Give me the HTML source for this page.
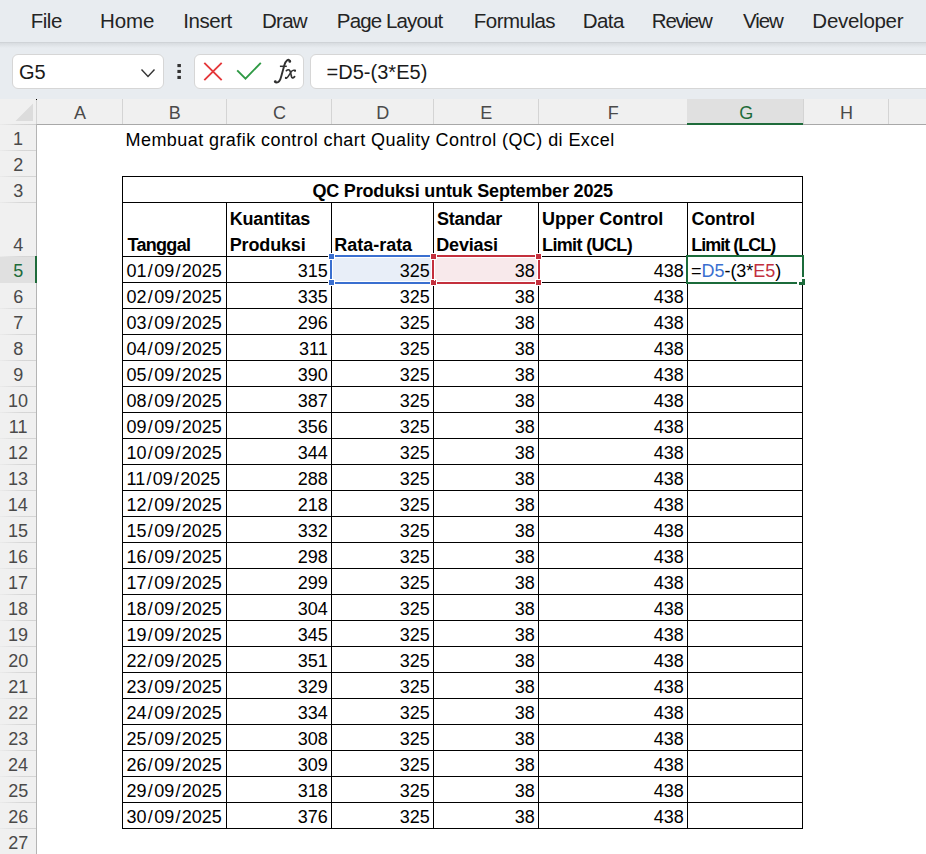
<!DOCTYPE html>
<html><head><meta charset="utf-8"><style>
html,body{margin:0;padding:0;width:926px;height:854px;overflow:hidden;background:#fff;position:relative}
.r{position:absolute}
.t{position:absolute;white-space:nowrap;line-height:0;height:0;font-family:"Liberation Sans",sans-serif}
svg{position:absolute}
</style></head><body>
<div class="r" style="left:0px;top:0px;width:926px;height:42px;background:#e8ecf0;"></div>
<div class="r" style="left:0px;top:42px;width:926px;height:57px;background:#e8ecf0;"></div>
<div class="r" style="left:0px;top:42px;width:926px;height:1px;background:#cfd3d7;"></div>
<div class="r" style="left:0px;top:43px;width:926px;height:5px;background:linear-gradient(#d8dce0,#e8ecf0);"></div>
<div class="t" style="left:30.66px;top:21.09px;font-size:20.5px;letter-spacing:-0.448px;color:#242424;">File</div>
<div class="t" style="left:99.96px;top:21.09px;font-size:20.5px;letter-spacing:-0.091px;color:#242424;">Home</div>
<div class="t" style="left:183.35px;top:21.09px;font-size:20.5px;letter-spacing:-0.461px;color:#242424;">Insert</div>
<div class="t" style="left:261.96px;top:21.09px;font-size:20.5px;letter-spacing:-0.709px;color:#242424;">Draw</div>
<div class="t" style="left:336.86px;top:21.09px;font-size:20.5px;letter-spacing:-0.876px;color:#242424;">Page Layout</div>
<div class="t" style="left:473.86px;top:21.09px;font-size:20.5px;letter-spacing:-0.533px;color:#242424;">Formulas</div>
<div class="t" style="left:582.66px;top:21.09px;font-size:20.5px;letter-spacing:-0.505px;color:#242424;">Data</div>
<div class="t" style="left:651.86px;top:21.09px;font-size:20.5px;letter-spacing:-1.260px;color:#242424;">Review</div>
<div class="t" style="left:742.90px;top:21.09px;font-size:20.5px;letter-spacing:-1.024px;color:#242424;">View</div>
<div class="t" style="left:812.36px;top:21.09px;font-size:20.5px;letter-spacing:-0.279px;color:#242424;">Developer</div>
<div class="r" style="left:12px;top:54px;width:152px;height:35px;background:#fff;border:1px solid #d6d6d6;border-radius:6px;box-sizing:border-box"></div>
<div class="t" style="left:19.00px;top:72.07px;font-size:20px;letter-spacing:0.000px;color:#1a1a1a;">G5</div>
<svg class="r" style="left:0;top:0" width="926" height="99"><polyline points="141.5,69.5 148,76.5 154.5,69.5" fill="none" stroke="#333" stroke-width="1.4"/><rect x="177.4" y="64" width="3.5" height="3.1" fill="#333"/><rect x="177.4" y="69.9" width="3.5" height="3.1" fill="#333"/><rect x="177.4" y="75.9" width="3.5" height="3.1" fill="#333"/></svg>
<div class="r" style="left:194px;top:54px;width:110px;height:35px;background:#fff;border:1px solid #d6d6d6;border-radius:6px;box-sizing:border-box"></div>
<svg class="r" style="left:0;top:0" width="926" height="99"><path d="M204.3 62.8 L221.7 80.2 M221.7 62.8 L204.3 80.2" stroke="#e5383b" stroke-width="1.9" fill="none"/><polyline points="237.2,70.3 245.5,78.6 260.8,62.8" stroke="#2f9a45" stroke-width="1.9" fill="none"/></svg>
<svg class="r" style="left:0;top:0" width="926" height="99" fill="none" stroke="#303030" stroke-linecap="round"><path d="M289.9 61.2 C289.6 59.6 288.3 59.4 287.2 60.2 C285.9 61.2 285.0 62.8 284.4 65 L281.2 76.5 C280.3 80.2 278.8 82.5 276.6 82.6 C275.9 82.6 275.4 82.3 275.2 81.8" stroke-width="1.9"/><circle cx="289.8" cy="61.4" r="1.35" fill="#303030" stroke="none"/><circle cx="275.3" cy="81.6" r="1.35" fill="#303030" stroke="none"/><path d="M279.9 66.3 L286.8 66.3" stroke-width="1.5" stroke-linecap="butt"/><path d="M286.4 70.6 C287.6 69.6 289.0 69.4 289.8 70.6 C290.4 71.5 290.9 73.5 291.4 76.2 C291.8 78.0 292.8 78.6 294.6 76.6" stroke-width="1.7"/><path d="M295.0 70.6 C293.6 69.8 292.4 70.4 291.3 71.6 L288.2 76.4 C287.4 77.8 286.6 78.4 285.8 78.0" stroke-width="1.5"/><circle cx="295.0" cy="70.7" r="1.1" fill="#303030" stroke="none"/><circle cx="285.9" cy="77.9" r="1.1" fill="#303030" stroke="none"/></svg>
<div class="r" style="left:310px;top:54px;width:640px;height:35px;background:#fff;border:1px solid #d6d6d6;border-radius:6px;box-sizing:border-box"></div>
<div class="t" style="left:326.60px;top:71.77px;font-size:20px;letter-spacing:0.011px;color:#1a1a1a;">=D5-(3*E5)</div>
<div class="r" style="left:0px;top:99px;width:926px;height:25px;background:#f0f0f0;"></div>
<div class="r" style="left:0px;top:124px;width:36px;height:730px;background:#f0f0f0;"></div>
<svg class="r" style="left:0;top:99" width="36" height="25"><polygon points="33,4.5 33,22 15.5,22" fill="#dcdcdc"/></svg>
<div class="r" style="left:122px;top:99px;width:1px;height:25px;background:#d4d4d4;"></div>
<div class="r" style="left:226px;top:99px;width:1px;height:25px;background:#d4d4d4;"></div>
<div class="r" style="left:331px;top:99px;width:1px;height:25px;background:#d4d4d4;"></div>
<div class="r" style="left:433px;top:99px;width:1px;height:25px;background:#d4d4d4;"></div>
<div class="r" style="left:538px;top:99px;width:1px;height:25px;background:#d4d4d4;"></div>
<div class="r" style="left:687px;top:99px;width:1px;height:25px;background:#d4d4d4;"></div>
<div class="r" style="left:687px;top:99px;width:116px;height:25px;background:#e0e0e0;"></div>
<div class="r" style="left:803px;top:99px;width:1px;height:25px;background:#d4d4d4;"></div>
<div class="r" style="left:888px;top:99px;width:1px;height:25px;background:#d4d4d4;"></div>
<div class="r" style="left:1000px;top:99px;width:1px;height:25px;background:#d4d4d4;"></div>
<div class="r" style="left:36px;top:124px;width:890px;height:1px;background:#a8a8a8;"></div>
<div class="r" style="left:0px;top:124px;width:36px;height:1px;background:linear-gradient(to right,#ebebeb,#d6d6d6 60%,#cfcfcf);"></div>
<div class="r" style="left:687px;top:123px;width:116px;height:2px;background:#1e6b3a;"></div>
<div class="r" style="left:36px;top:99px;width:1px;height:25px;background:#d4d4d4;"></div>
<div class="r" style="left:36px;top:124px;width:1px;height:730px;background:#b4b4b4;"></div>
<div class="r" style="left:36px;top:99px;width:1px;height:1px;background:#000;"></div>
<div class="t" style="left:74.02px;top:112.56px;font-size:18px;letter-spacing:0.000px;color:#4a4a4a;">A</div>
<div class="t" style="left:168.75px;top:112.56px;font-size:18px;letter-spacing:0.000px;color:#4a4a4a;">B</div>
<div class="t" style="left:272.89px;top:112.56px;font-size:18px;letter-spacing:0.000px;color:#4a4a4a;">C</div>
<div class="t" style="left:376.20px;top:112.56px;font-size:18px;letter-spacing:0.000px;color:#4a4a4a;">D</div>
<div class="t" style="left:480.16px;top:112.56px;font-size:18px;letter-spacing:0.000px;color:#4a4a4a;">E</div>
<div class="t" style="left:607.65px;top:112.56px;font-size:18px;letter-spacing:0.000px;color:#4a4a4a;">F</div>
<div class="t" style="left:739.21px;top:112.56px;font-size:18px;letter-spacing:0.000px;color:#1e6b3a;">G</div>
<div class="t" style="left:840.02px;top:112.56px;font-size:18px;letter-spacing:0.000px;color:#4a4a4a;">H</div>
<div class="r" style="left:0px;top:150px;width:36px;height:1px;background:linear-gradient(to right,#ebebeb,#d6d6d6 60%,#d4d4d4);"></div>
<div class="r" style="left:0px;top:176px;width:36px;height:1px;background:linear-gradient(to right,#ebebeb,#d6d6d6 60%,#d4d4d4);"></div>
<div class="r" style="left:0px;top:202px;width:36px;height:1px;background:linear-gradient(to right,#ebebeb,#d6d6d6 60%,#d4d4d4);"></div>
<div class="r" style="left:0px;top:256px;width:36px;height:1px;background:linear-gradient(to right,#ebebeb,#d6d6d6 60%,#d4d4d4);"></div>
<div class="r" style="left:0px;top:282px;width:36px;height:1px;background:linear-gradient(to right,#ebebeb,#d6d6d6 60%,#d4d4d4);"></div>
<div class="r" style="left:0px;top:257px;width:35px;height:26px;background:#e0e0e0;"></div>
<div class="r" style="left:35px;top:256px;width:2px;height:27px;background:#1e6b3a;"></div>
<div class="r" style="left:0px;top:308px;width:36px;height:1px;background:linear-gradient(to right,#ebebeb,#d6d6d6 60%,#d4d4d4);"></div>
<div class="r" style="left:0px;top:334px;width:36px;height:1px;background:linear-gradient(to right,#ebebeb,#d6d6d6 60%,#d4d4d4);"></div>
<div class="r" style="left:0px;top:360px;width:36px;height:1px;background:linear-gradient(to right,#ebebeb,#d6d6d6 60%,#d4d4d4);"></div>
<div class="r" style="left:0px;top:386px;width:36px;height:1px;background:linear-gradient(to right,#ebebeb,#d6d6d6 60%,#d4d4d4);"></div>
<div class="r" style="left:0px;top:412px;width:36px;height:1px;background:linear-gradient(to right,#ebebeb,#d6d6d6 60%,#d4d4d4);"></div>
<div class="r" style="left:0px;top:438px;width:36px;height:1px;background:linear-gradient(to right,#ebebeb,#d6d6d6 60%,#d4d4d4);"></div>
<div class="r" style="left:0px;top:464px;width:36px;height:1px;background:linear-gradient(to right,#ebebeb,#d6d6d6 60%,#d4d4d4);"></div>
<div class="r" style="left:0px;top:490px;width:36px;height:1px;background:linear-gradient(to right,#ebebeb,#d6d6d6 60%,#d4d4d4);"></div>
<div class="r" style="left:0px;top:516px;width:36px;height:1px;background:linear-gradient(to right,#ebebeb,#d6d6d6 60%,#d4d4d4);"></div>
<div class="r" style="left:0px;top:542px;width:36px;height:1px;background:linear-gradient(to right,#ebebeb,#d6d6d6 60%,#d4d4d4);"></div>
<div class="r" style="left:0px;top:568px;width:36px;height:1px;background:linear-gradient(to right,#ebebeb,#d6d6d6 60%,#d4d4d4);"></div>
<div class="r" style="left:0px;top:594px;width:36px;height:1px;background:linear-gradient(to right,#ebebeb,#d6d6d6 60%,#d4d4d4);"></div>
<div class="r" style="left:0px;top:620px;width:36px;height:1px;background:linear-gradient(to right,#ebebeb,#d6d6d6 60%,#d4d4d4);"></div>
<div class="r" style="left:0px;top:646px;width:36px;height:1px;background:linear-gradient(to right,#ebebeb,#d6d6d6 60%,#d4d4d4);"></div>
<div class="r" style="left:0px;top:672px;width:36px;height:1px;background:linear-gradient(to right,#ebebeb,#d6d6d6 60%,#d4d4d4);"></div>
<div class="r" style="left:0px;top:698px;width:36px;height:1px;background:linear-gradient(to right,#ebebeb,#d6d6d6 60%,#d4d4d4);"></div>
<div class="r" style="left:0px;top:724px;width:36px;height:1px;background:linear-gradient(to right,#ebebeb,#d6d6d6 60%,#d4d4d4);"></div>
<div class="r" style="left:0px;top:750px;width:36px;height:1px;background:linear-gradient(to right,#ebebeb,#d6d6d6 60%,#d4d4d4);"></div>
<div class="r" style="left:0px;top:776px;width:36px;height:1px;background:linear-gradient(to right,#ebebeb,#d6d6d6 60%,#d4d4d4);"></div>
<div class="r" style="left:0px;top:802px;width:36px;height:1px;background:linear-gradient(to right,#ebebeb,#d6d6d6 60%,#d4d4d4);"></div>
<div class="r" style="left:0px;top:828px;width:36px;height:1px;background:linear-gradient(to right,#ebebeb,#d6d6d6 60%,#d4d4d4);"></div>
<div class="r" style="left:0px;top:854px;width:36px;height:1px;background:linear-gradient(to right,#ebebeb,#d6d6d6 60%,#d4d4d4);"></div>
<div class="t" style="left:13.04px;top:139.26px;font-size:18px;letter-spacing:0.000px;color:#4a4a4a;">1</div>
<div class="t" style="left:13.31px;top:165.26px;font-size:18px;letter-spacing:0.000px;color:#4a4a4a;">2</div>
<div class="t" style="left:13.35px;top:191.26px;font-size:18px;letter-spacing:0.000px;color:#4a4a4a;">3</div>
<div class="t" style="left:13.35px;top:245.26px;font-size:18px;letter-spacing:0.000px;color:#4a4a4a;">4</div>
<div class="t" style="left:13.30px;top:271.26px;font-size:18px;letter-spacing:0.000px;color:#1e6b3a;">5</div>
<div class="t" style="left:13.21px;top:297.26px;font-size:18px;letter-spacing:0.000px;color:#4a4a4a;">6</div>
<div class="t" style="left:13.31px;top:323.26px;font-size:18px;letter-spacing:0.000px;color:#4a4a4a;">7</div>
<div class="t" style="left:13.30px;top:349.26px;font-size:18px;letter-spacing:0.000px;color:#4a4a4a;">8</div>
<div class="t" style="left:13.30px;top:375.26px;font-size:18px;letter-spacing:0.000px;color:#4a4a4a;">9</div>
<div class="t" style="left:7.95px;top:401.26px;font-size:18px;letter-spacing:0.000px;color:#4a4a4a;">10</div>
<div class="t" style="left:8.72px;top:427.26px;font-size:18px;letter-spacing:0.000px;color:#4a4a4a;">11</div>
<div class="t" style="left:8.09px;top:453.26px;font-size:18px;letter-spacing:0.000px;color:#4a4a4a;">12</div>
<div class="t" style="left:7.99px;top:479.26px;font-size:18px;letter-spacing:0.000px;color:#4a4a4a;">13</div>
<div class="t" style="left:7.86px;top:505.26px;font-size:18px;letter-spacing:0.000px;color:#4a4a4a;">14</div>
<div class="t" style="left:7.99px;top:531.26px;font-size:18px;letter-spacing:0.000px;color:#4a4a4a;">15</div>
<div class="t" style="left:7.99px;top:557.26px;font-size:18px;letter-spacing:0.000px;color:#4a4a4a;">16</div>
<div class="t" style="left:8.09px;top:583.26px;font-size:18px;letter-spacing:0.000px;color:#4a4a4a;">17</div>
<div class="t" style="left:7.99px;top:609.26px;font-size:18px;letter-spacing:0.000px;color:#4a4a4a;">18</div>
<div class="t" style="left:8.04px;top:635.26px;font-size:18px;letter-spacing:0.000px;color:#4a4a4a;">19</div>
<div class="t" style="left:8.18px;top:661.26px;font-size:18px;letter-spacing:0.000px;color:#4a4a4a;">20</div>
<div class="t" style="left:8.27px;top:687.26px;font-size:18px;letter-spacing:0.000px;color:#4a4a4a;">21</div>
<div class="t" style="left:8.31px;top:713.26px;font-size:18px;letter-spacing:0.000px;color:#4a4a4a;">22</div>
<div class="t" style="left:8.22px;top:739.26px;font-size:18px;letter-spacing:0.000px;color:#4a4a4a;">23</div>
<div class="t" style="left:8.09px;top:765.26px;font-size:18px;letter-spacing:0.000px;color:#4a4a4a;">24</div>
<div class="t" style="left:8.22px;top:791.26px;font-size:18px;letter-spacing:0.000px;color:#4a4a4a;">25</div>
<div class="t" style="left:8.22px;top:817.26px;font-size:18px;letter-spacing:0.000px;color:#4a4a4a;">26</div>
<div class="t" style="left:8.31px;top:843.26px;font-size:18px;letter-spacing:0.000px;color:#4a4a4a;">27</div>
<div class="t" style="left:125.56px;top:139.96px;font-size:18px;letter-spacing:0.429px;color:#000;">Membuat grafik control chart Quality Control (QC) di Excel</div>
<div class="r" style="left:333px;top:258px;width:98px;height:23px;background:#e8eef8;"></div>
<div class="r" style="left:435px;top:258px;width:102px;height:23px;background:#f8e9eb;"></div>
<div class="r" style="left:122px;top:176px;width:681px;height:1px;background:#000;"></div>
<div class="r" style="left:122px;top:202px;width:681px;height:1px;background:#000;"></div>
<div class="r" style="left:122px;top:256px;width:681px;height:1px;background:#000;"></div>
<div class="r" style="left:122px;top:282px;width:681px;height:1px;background:#000;"></div>
<div class="r" style="left:122px;top:308px;width:681px;height:1px;background:#000;"></div>
<div class="r" style="left:122px;top:334px;width:681px;height:1px;background:#000;"></div>
<div class="r" style="left:122px;top:360px;width:681px;height:1px;background:#000;"></div>
<div class="r" style="left:122px;top:386px;width:681px;height:1px;background:#000;"></div>
<div class="r" style="left:122px;top:412px;width:681px;height:1px;background:#000;"></div>
<div class="r" style="left:122px;top:438px;width:681px;height:1px;background:#000;"></div>
<div class="r" style="left:122px;top:464px;width:681px;height:1px;background:#000;"></div>
<div class="r" style="left:122px;top:490px;width:681px;height:1px;background:#000;"></div>
<div class="r" style="left:122px;top:516px;width:681px;height:1px;background:#000;"></div>
<div class="r" style="left:122px;top:542px;width:681px;height:1px;background:#000;"></div>
<div class="r" style="left:122px;top:568px;width:681px;height:1px;background:#000;"></div>
<div class="r" style="left:122px;top:594px;width:681px;height:1px;background:#000;"></div>
<div class="r" style="left:122px;top:620px;width:681px;height:1px;background:#000;"></div>
<div class="r" style="left:122px;top:646px;width:681px;height:1px;background:#000;"></div>
<div class="r" style="left:122px;top:672px;width:681px;height:1px;background:#000;"></div>
<div class="r" style="left:122px;top:698px;width:681px;height:1px;background:#000;"></div>
<div class="r" style="left:122px;top:724px;width:681px;height:1px;background:#000;"></div>
<div class="r" style="left:122px;top:750px;width:681px;height:1px;background:#000;"></div>
<div class="r" style="left:122px;top:776px;width:681px;height:1px;background:#000;"></div>
<div class="r" style="left:122px;top:802px;width:681px;height:1px;background:#000;"></div>
<div class="r" style="left:122px;top:828px;width:681px;height:1px;background:#000;"></div>
<div class="r" style="left:122px;top:176px;width:1px;height:653px;background:#000;"></div>
<div class="r" style="left:802px;top:176px;width:1px;height:653px;background:#000;"></div>
<div class="r" style="left:226px;top:202px;width:1px;height:627px;background:#000;"></div>
<div class="r" style="left:331px;top:202px;width:1px;height:627px;background:#000;"></div>
<div class="r" style="left:433px;top:202px;width:1px;height:627px;background:#000;"></div>
<div class="r" style="left:538px;top:202px;width:1px;height:627px;background:#000;"></div>
<div class="r" style="left:687px;top:202px;width:1px;height:627px;background:#000;"></div>
<div class="t" style="left:312.38px;top:191.16px;font-size:18px;letter-spacing:-0.172px;color:#000;font-weight:bold;">QC Produksi untuk September 2025</div>
<div class="t" style="left:127.42px;top:245.26px;font-size:18px;letter-spacing:-0.673px;color:#000;font-weight:bold;">Tanggal</div>
<div class="t" style="left:229.73px;top:219.36px;font-size:18px;letter-spacing:-0.175px;color:#000;font-weight:bold;">Kuantitas</div>
<div class="t" style="left:229.73px;top:245.26px;font-size:18px;letter-spacing:-0.144px;color:#000;font-weight:bold;">Produksi</div>
<div class="t" style="left:334.33px;top:245.26px;font-size:18px;letter-spacing:-0.030px;color:#000;font-weight:bold;">Rata-rata</div>
<div class="t" style="left:436.96px;top:219.36px;font-size:18px;letter-spacing:-0.273px;color:#000;font-weight:bold;">Standar</div>
<div class="t" style="left:436.33px;top:245.26px;font-size:18px;letter-spacing:-0.210px;color:#000;font-weight:bold;">Deviasi</div>
<div class="t" style="left:542.12px;top:219.36px;font-size:18px;letter-spacing:0.007px;color:#000;font-weight:bold;">Upper Control</div>
<div class="t" style="left:542.03px;top:245.26px;font-size:18px;letter-spacing:-0.635px;color:#000;font-weight:bold;">Limit (UCL)</div>
<div class="t" style="left:691.58px;top:219.36px;font-size:18px;letter-spacing:-0.102px;color:#000;font-weight:bold;">Control</div>
<div class="t" style="left:691.13px;top:245.26px;font-size:18px;letter-spacing:-0.977px;color:#000;font-weight:bold;">Limit (LCL)</div>
<div class="t" style="left:126.58px;top:271.26px;font-size:18px">01<span style="margin:0 1.25px">/</span>09<span style="margin:0 1.25px">/</span>2025</div>
<div class="t" style="left:297.67px;top:271.26px;font-size:18px">315</div>
<div class="t" style="left:399.67px;top:271.26px;font-size:18px">325</div>
<div class="t" style="left:514.68px;top:271.26px;font-size:18px">38</div>
<div class="t" style="left:653.67px;top:271.26px;font-size:18px">438</div>
<div class="t" style="left:126.58px;top:297.26px;font-size:18px">02<span style="margin:0 1.25px">/</span>09<span style="margin:0 1.25px">/</span>2025</div>
<div class="t" style="left:297.67px;top:297.26px;font-size:18px">335</div>
<div class="t" style="left:399.67px;top:297.26px;font-size:18px">325</div>
<div class="t" style="left:514.68px;top:297.26px;font-size:18px">38</div>
<div class="t" style="left:653.67px;top:297.26px;font-size:18px">438</div>
<div class="t" style="left:126.58px;top:323.26px;font-size:18px">03<span style="margin:0 1.25px">/</span>09<span style="margin:0 1.25px">/</span>2025</div>
<div class="t" style="left:297.67px;top:323.26px;font-size:18px">296</div>
<div class="t" style="left:399.67px;top:323.26px;font-size:18px">325</div>
<div class="t" style="left:514.68px;top:323.26px;font-size:18px">38</div>
<div class="t" style="left:653.67px;top:323.26px;font-size:18px">438</div>
<div class="t" style="left:126.58px;top:349.26px;font-size:18px">04<span style="margin:0 1.25px">/</span>09<span style="margin:0 1.25px">/</span>2025</div>
<div class="t" style="left:299.00px;top:349.26px;font-size:18px">311</div>
<div class="t" style="left:399.67px;top:349.26px;font-size:18px">325</div>
<div class="t" style="left:514.68px;top:349.26px;font-size:18px">38</div>
<div class="t" style="left:653.67px;top:349.26px;font-size:18px">438</div>
<div class="t" style="left:126.58px;top:375.26px;font-size:18px">05<span style="margin:0 1.25px">/</span>09<span style="margin:0 1.25px">/</span>2025</div>
<div class="t" style="left:297.67px;top:375.26px;font-size:18px">390</div>
<div class="t" style="left:399.67px;top:375.26px;font-size:18px">325</div>
<div class="t" style="left:514.68px;top:375.26px;font-size:18px">38</div>
<div class="t" style="left:653.67px;top:375.26px;font-size:18px">438</div>
<div class="t" style="left:126.58px;top:401.26px;font-size:18px">08<span style="margin:0 1.25px">/</span>09<span style="margin:0 1.25px">/</span>2025</div>
<div class="t" style="left:297.67px;top:401.26px;font-size:18px">387</div>
<div class="t" style="left:399.67px;top:401.26px;font-size:18px">325</div>
<div class="t" style="left:514.68px;top:401.26px;font-size:18px">38</div>
<div class="t" style="left:653.67px;top:401.26px;font-size:18px">438</div>
<div class="t" style="left:126.58px;top:427.26px;font-size:18px">09<span style="margin:0 1.25px">/</span>09<span style="margin:0 1.25px">/</span>2025</div>
<div class="t" style="left:297.67px;top:427.26px;font-size:18px">356</div>
<div class="t" style="left:399.67px;top:427.26px;font-size:18px">325</div>
<div class="t" style="left:514.68px;top:427.26px;font-size:18px">38</div>
<div class="t" style="left:653.67px;top:427.26px;font-size:18px">438</div>
<div class="t" style="left:126.58px;top:453.26px;font-size:18px">10<span style="margin:0 1.25px">/</span>09<span style="margin:0 1.25px">/</span>2025</div>
<div class="t" style="left:297.67px;top:453.26px;font-size:18px">344</div>
<div class="t" style="left:399.67px;top:453.26px;font-size:18px">325</div>
<div class="t" style="left:514.68px;top:453.26px;font-size:18px">38</div>
<div class="t" style="left:653.67px;top:453.26px;font-size:18px">438</div>
<div class="t" style="left:126.58px;top:479.26px;font-size:18px">11<span style="margin:0 1.25px">/</span>09<span style="margin:0 1.25px">/</span>2025</div>
<div class="t" style="left:297.67px;top:479.26px;font-size:18px">288</div>
<div class="t" style="left:399.67px;top:479.26px;font-size:18px">325</div>
<div class="t" style="left:514.68px;top:479.26px;font-size:18px">38</div>
<div class="t" style="left:653.67px;top:479.26px;font-size:18px">438</div>
<div class="t" style="left:126.58px;top:505.26px;font-size:18px">12<span style="margin:0 1.25px">/</span>09<span style="margin:0 1.25px">/</span>2025</div>
<div class="t" style="left:297.67px;top:505.26px;font-size:18px">218</div>
<div class="t" style="left:399.67px;top:505.26px;font-size:18px">325</div>
<div class="t" style="left:514.68px;top:505.26px;font-size:18px">38</div>
<div class="t" style="left:653.67px;top:505.26px;font-size:18px">438</div>
<div class="t" style="left:126.58px;top:531.26px;font-size:18px">15<span style="margin:0 1.25px">/</span>09<span style="margin:0 1.25px">/</span>2025</div>
<div class="t" style="left:297.67px;top:531.26px;font-size:18px">332</div>
<div class="t" style="left:399.67px;top:531.26px;font-size:18px">325</div>
<div class="t" style="left:514.68px;top:531.26px;font-size:18px">38</div>
<div class="t" style="left:653.67px;top:531.26px;font-size:18px">438</div>
<div class="t" style="left:126.58px;top:557.26px;font-size:18px">16<span style="margin:0 1.25px">/</span>09<span style="margin:0 1.25px">/</span>2025</div>
<div class="t" style="left:297.67px;top:557.26px;font-size:18px">298</div>
<div class="t" style="left:399.67px;top:557.26px;font-size:18px">325</div>
<div class="t" style="left:514.68px;top:557.26px;font-size:18px">38</div>
<div class="t" style="left:653.67px;top:557.26px;font-size:18px">438</div>
<div class="t" style="left:126.58px;top:583.26px;font-size:18px">17<span style="margin:0 1.25px">/</span>09<span style="margin:0 1.25px">/</span>2025</div>
<div class="t" style="left:297.67px;top:583.26px;font-size:18px">299</div>
<div class="t" style="left:399.67px;top:583.26px;font-size:18px">325</div>
<div class="t" style="left:514.68px;top:583.26px;font-size:18px">38</div>
<div class="t" style="left:653.67px;top:583.26px;font-size:18px">438</div>
<div class="t" style="left:126.58px;top:609.26px;font-size:18px">18<span style="margin:0 1.25px">/</span>09<span style="margin:0 1.25px">/</span>2025</div>
<div class="t" style="left:297.67px;top:609.26px;font-size:18px">304</div>
<div class="t" style="left:399.67px;top:609.26px;font-size:18px">325</div>
<div class="t" style="left:514.68px;top:609.26px;font-size:18px">38</div>
<div class="t" style="left:653.67px;top:609.26px;font-size:18px">438</div>
<div class="t" style="left:126.58px;top:635.26px;font-size:18px">19<span style="margin:0 1.25px">/</span>09<span style="margin:0 1.25px">/</span>2025</div>
<div class="t" style="left:297.67px;top:635.26px;font-size:18px">345</div>
<div class="t" style="left:399.67px;top:635.26px;font-size:18px">325</div>
<div class="t" style="left:514.68px;top:635.26px;font-size:18px">38</div>
<div class="t" style="left:653.67px;top:635.26px;font-size:18px">438</div>
<div class="t" style="left:126.58px;top:661.26px;font-size:18px">22<span style="margin:0 1.25px">/</span>09<span style="margin:0 1.25px">/</span>2025</div>
<div class="t" style="left:297.67px;top:661.26px;font-size:18px">351</div>
<div class="t" style="left:399.67px;top:661.26px;font-size:18px">325</div>
<div class="t" style="left:514.68px;top:661.26px;font-size:18px">38</div>
<div class="t" style="left:653.67px;top:661.26px;font-size:18px">438</div>
<div class="t" style="left:126.58px;top:687.26px;font-size:18px">23<span style="margin:0 1.25px">/</span>09<span style="margin:0 1.25px">/</span>2025</div>
<div class="t" style="left:297.67px;top:687.26px;font-size:18px">329</div>
<div class="t" style="left:399.67px;top:687.26px;font-size:18px">325</div>
<div class="t" style="left:514.68px;top:687.26px;font-size:18px">38</div>
<div class="t" style="left:653.67px;top:687.26px;font-size:18px">438</div>
<div class="t" style="left:126.58px;top:713.26px;font-size:18px">24<span style="margin:0 1.25px">/</span>09<span style="margin:0 1.25px">/</span>2025</div>
<div class="t" style="left:297.67px;top:713.26px;font-size:18px">334</div>
<div class="t" style="left:399.67px;top:713.26px;font-size:18px">325</div>
<div class="t" style="left:514.68px;top:713.26px;font-size:18px">38</div>
<div class="t" style="left:653.67px;top:713.26px;font-size:18px">438</div>
<div class="t" style="left:126.58px;top:739.26px;font-size:18px">25<span style="margin:0 1.25px">/</span>09<span style="margin:0 1.25px">/</span>2025</div>
<div class="t" style="left:297.67px;top:739.26px;font-size:18px">308</div>
<div class="t" style="left:399.67px;top:739.26px;font-size:18px">325</div>
<div class="t" style="left:514.68px;top:739.26px;font-size:18px">38</div>
<div class="t" style="left:653.67px;top:739.26px;font-size:18px">438</div>
<div class="t" style="left:126.58px;top:765.26px;font-size:18px">26<span style="margin:0 1.25px">/</span>09<span style="margin:0 1.25px">/</span>2025</div>
<div class="t" style="left:297.67px;top:765.26px;font-size:18px">309</div>
<div class="t" style="left:399.67px;top:765.26px;font-size:18px">325</div>
<div class="t" style="left:514.68px;top:765.26px;font-size:18px">38</div>
<div class="t" style="left:653.67px;top:765.26px;font-size:18px">438</div>
<div class="t" style="left:126.58px;top:791.26px;font-size:18px">29<span style="margin:0 1.25px">/</span>09<span style="margin:0 1.25px">/</span>2025</div>
<div class="t" style="left:297.67px;top:791.26px;font-size:18px">318</div>
<div class="t" style="left:399.67px;top:791.26px;font-size:18px">325</div>
<div class="t" style="left:514.68px;top:791.26px;font-size:18px">38</div>
<div class="t" style="left:653.67px;top:791.26px;font-size:18px">438</div>
<div class="t" style="left:126.58px;top:817.26px;font-size:18px">30<span style="margin:0 1.25px">/</span>09<span style="margin:0 1.25px">/</span>2025</div>
<div class="t" style="left:297.67px;top:817.26px;font-size:18px">376</div>
<div class="t" style="left:399.67px;top:817.26px;font-size:18px">325</div>
<div class="t" style="left:514.68px;top:817.26px;font-size:18px">38</div>
<div class="t" style="left:653.67px;top:817.26px;font-size:18px">438</div>
<div class="r" style="left:328px;top:255px;width:108px;height:2px;background:#fff;"></div>
<div class="r" style="left:328px;top:282px;width:108px;height:2px;background:#fff;"></div>
<div class="r" style="left:330px;top:253px;width:2px;height:32px;background:#fff;"></div>
<div class="r" style="left:433px;top:253px;width:2px;height:32px;background:#fff;"></div>
<div class="r" style="left:335px;top:255px;width:95px;height:2px;background:#3a6fd0;"></div>
<div class="r" style="left:335px;top:282px;width:95px;height:2px;background:#3a6fd0;"></div>
<div class="r" style="left:330px;top:260px;width:2px;height:19px;background:#3a6fd0;"></div>
<div class="r" style="left:433px;top:260px;width:2px;height:19px;background:#3a6fd0;"></div>
<div class="r" style="left:328px;top:253px;width:7px;height:7px;background:#fff;"></div>
<div class="r" style="left:329px;top:254px;width:5px;height:5px;background:#3a6fd0;"></div>
<div class="r" style="left:430px;top:253px;width:7px;height:7px;background:#fff;"></div>
<div class="r" style="left:431px;top:254px;width:5px;height:5px;background:#3a6fd0;"></div>
<div class="r" style="left:328px;top:279px;width:7px;height:7px;background:#fff;"></div>
<div class="r" style="left:329px;top:280px;width:5px;height:5px;background:#3a6fd0;"></div>
<div class="r" style="left:430px;top:279px;width:7px;height:7px;background:#fff;"></div>
<div class="r" style="left:431px;top:280px;width:5px;height:5px;background:#3a6fd0;"></div>
<div class="r" style="left:430px;top:255px;width:111px;height:2px;background:#fff;"></div>
<div class="r" style="left:430px;top:282px;width:111px;height:2px;background:#fff;"></div>
<div class="r" style="left:432px;top:253px;width:2px;height:32px;background:#fff;"></div>
<div class="r" style="left:538px;top:253px;width:2px;height:32px;background:#fff;"></div>
<div class="r" style="left:437px;top:255px;width:98px;height:2px;background:#c4303d;"></div>
<div class="r" style="left:437px;top:282px;width:98px;height:2px;background:#c4303d;"></div>
<div class="r" style="left:432px;top:260px;width:2px;height:19px;background:#c4303d;"></div>
<div class="r" style="left:538px;top:260px;width:2px;height:19px;background:#c4303d;"></div>
<div class="r" style="left:430px;top:253px;width:7px;height:7px;background:#fff;"></div>
<div class="r" style="left:431px;top:254px;width:5px;height:5px;background:#c4303d;"></div>
<div class="r" style="left:535px;top:253px;width:7px;height:7px;background:#fff;"></div>
<div class="r" style="left:536px;top:254px;width:5px;height:5px;background:#c4303d;"></div>
<div class="r" style="left:430px;top:279px;width:7px;height:7px;background:#fff;"></div>
<div class="r" style="left:431px;top:280px;width:5px;height:5px;background:#c4303d;"></div>
<div class="r" style="left:535px;top:279px;width:7px;height:7px;background:#fff;"></div>
<div class="r" style="left:536px;top:280px;width:5px;height:5px;background:#c4303d;"></div>
<div class="r" style="left:434px;top:259px;width:1px;height:22px;background:#fff;"></div>
<div class="r" style="left:686px;top:255px;width:117px;height:2px;background:#1b6b3a;"></div>
<div class="r" style="left:686px;top:282px;width:112px;height:2px;background:#1b6b3a;"></div>
<div class="r" style="left:686px;top:255px;width:2px;height:29px;background:#1b6b3a;"></div>
<div class="r" style="left:802px;top:255px;width:2px;height:23px;background:#1b6b3a;"></div>
<div class="r" style="left:797px;top:277px;width:9px;height:9px;background:#fff;"></div>
<div class="r" style="left:802px;top:279px;width:3px;height:6px;background:#1b6b3a;"></div>
<div class="r" style="left:799px;top:282px;width:6px;height:3px;background:#1b6b3a;"></div>
<div class="r" style="left:802px;top:285px;width:1px;height:4px;background:#000;"></div>
<div class="t" style="left:691.10px;top:271.16px;font-size:18px;letter-spacing:-0.052px"><span style="color:#000">=</span><span style="color:#3a6fd0">D5</span><span style="color:#000">-(3*</span><span style="color:#c2303f">E5</span><span style="color:#000">)</span></div>
</body></html>
